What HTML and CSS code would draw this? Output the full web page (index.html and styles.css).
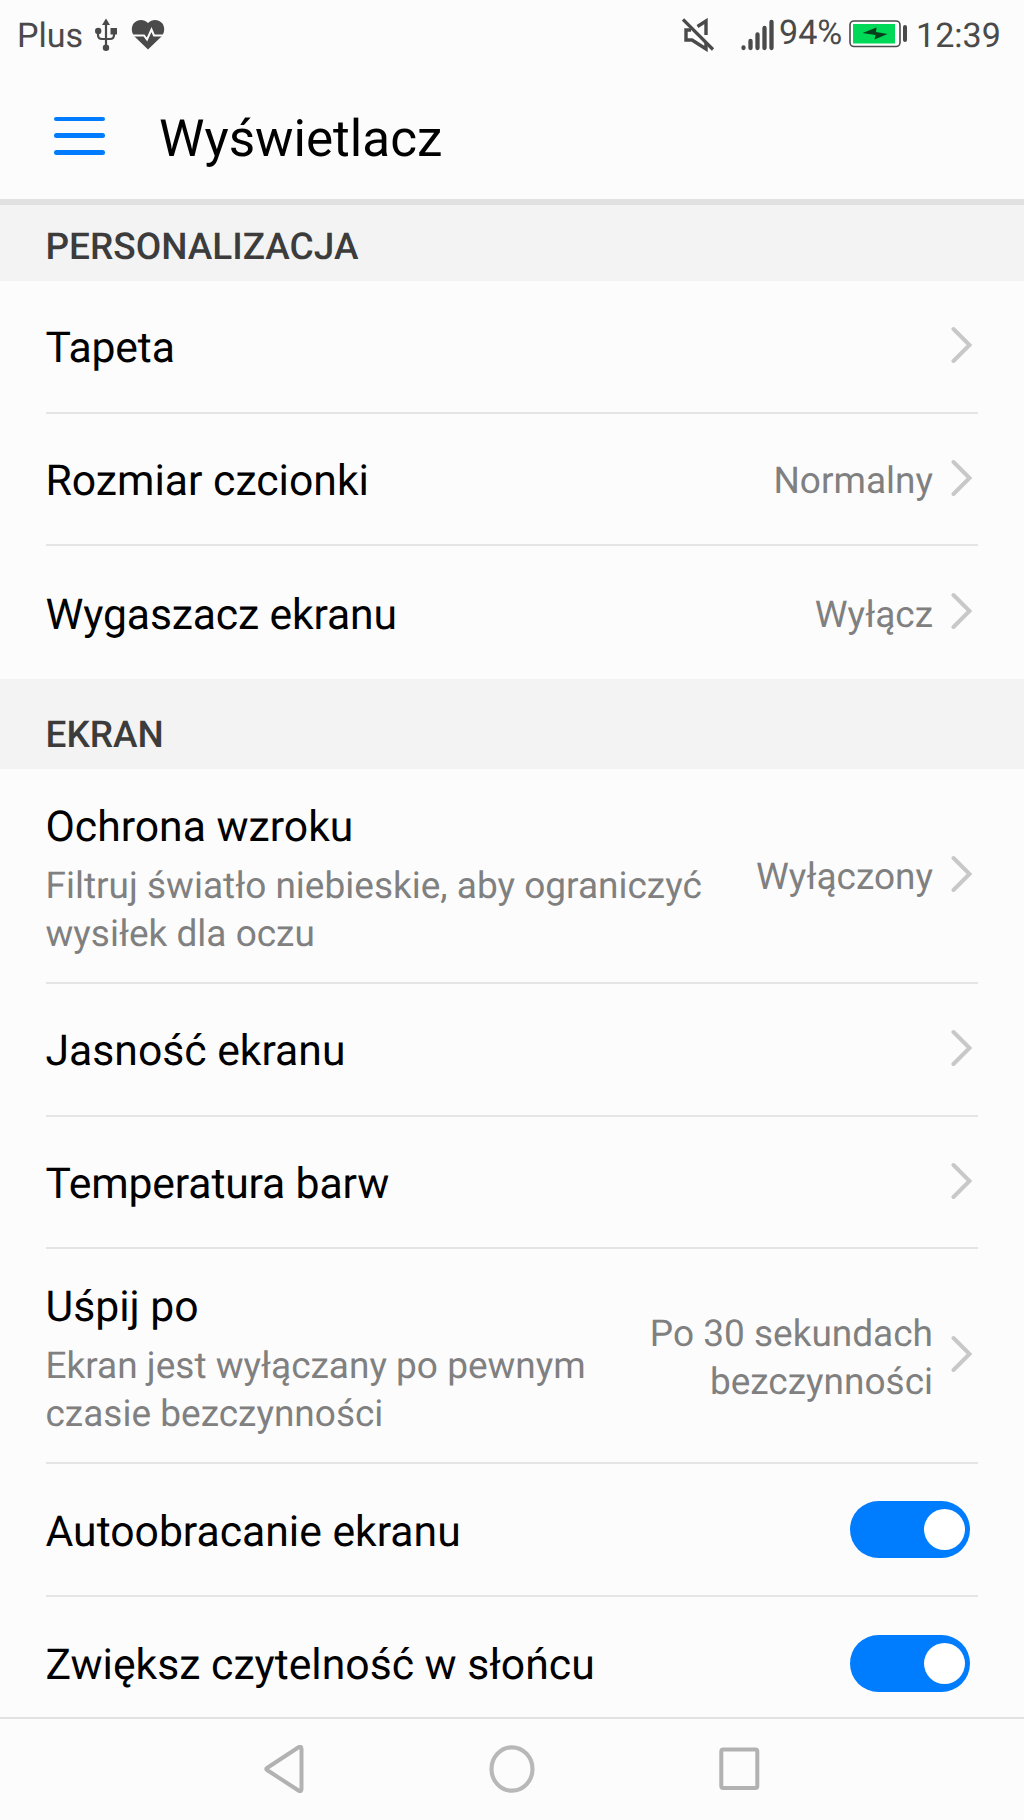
FILE: index.html
```html
<!DOCTYPE html>
<html lang="pl">
<head>
    <meta charset="UTF-8">
    <meta name="viewport" content="width=device-width, initial-scale=1.0">
    <title>Wyświetlacz</title>
    <link rel="stylesheet" href="styles.css">
</head>
<body>

    <svg class="sprite" width="0" height="0">
        <symbol id="arrow" viewBox="0 0 22 38">
            <path d="M2.5 3 L18.5 19 L2.5 35" fill="none" stroke="#c8c8c8" stroke-width="4" stroke-linecap="round" stroke-linejoin="miter"/>
        </symbol>
    </svg>

    <div class="wrap">
        <div class="status">
            <span class="carrier">Plus</span>
            <svg class="usb" width="24" height="34" viewBox="0 0 24 34">
                <path d="M12 4V29M4 13v4q0 4 4 4h8q4 0 4-4v-4" fill="none" stroke="#4a4a4a" stroke-width="2.2"/>
                <path d="M12 0.5L16 7H8z" fill="#4a4a4a"/>
                <circle cx="4.2" cy="13" r="3.2" fill="#4a4a4a"/>
                <rect x="16.5" y="10" width="6.5" height="6.5" fill="#4a4a4a"/>
                <circle cx="12" cy="29.7" r="3.2" fill="#4a4a4a"/>
            </svg>
            <svg class="heart" width="34" height="30" viewBox="0 0 34 30">
                <path d="M17 29.5L3.5 16.5C0 12.5 0 6.5 3 3C7-1 13-1 17 3C21-1 27-1 31 3C34 6.5 34 12.5 30.5 16.5z" fill="#4a4a4a"/>
                <path d="M0 15.5H13L16 19.5L20.5 9.5L23 15.5H34" fill="none" stroke="#fcfcfc" stroke-width="2"/>
            </svg>
            <span class="space"></span>
            <svg class="mute" width="33" height="34" viewBox="0 0 33 34">
                <path d="M9 12H4V22H10L24 31V25M15.5 8.5L24 3V17" fill="none" stroke="#4a4a4a" stroke-width="3.4"/>
                <path d="M1 1.5L31 31.5" stroke="#4a4a4a" stroke-width="3.2"/>
            </svg>
            <svg class="signal" width="33" height="32" viewBox="0 0 33 32">
                <path d="M2.5 28.5v.5M9.5 22v7M16.5 15.5v13.5M23.5 9v20M30.5 3v26" stroke="#4a4a4a" stroke-width="4.3" stroke-linecap="round"/>
            </svg>
            <span class="percent">94%</span>
            <svg class="battery" width="59" height="28" viewBox="0 0 59 28">
                <rect x="1" y="1" width="50" height="25.5" rx="4" fill="#fff" stroke="#4a4a4a" stroke-width="1.6"/>
                <rect x="4" y="4" width="42" height="19.5" fill="#00d957"/>
                <path d="M13.5 13L27.5 7.5L27 12L38.5 14L25.5 19.5L26.5 15z" fill="#083f1b"/>
                <path d="M56 7v13" stroke="#4a4a4a" stroke-width="4" stroke-linecap="round"/>
            </svg>
            <span class="time">12:39</span>
        </div>

        <div class="header">
            <div class="menu"><i></i><i></i><i></i></div>
            <h1>Wyświetlacz</h1>
        </div>

        <div class="cont">
            <h2 class="first">PERSONALIZACJA</h2>
            <div class="row">
                <strong class="narrow">Tapeta</strong>
                <svg class="arrow"><use href="#arrow"/></svg>
            </div>
            <div class="row">
                <strong>Rozmiar czcionki</strong>
                <span class="value">Normalny</span>
                <svg class="arrow"><use href="#arrow"/></svg>
            </div>
            <div class="row last">
                <strong class="narrow">Wygaszacz ekranu</strong>
                <span class="value">Wyłącz</span>
                <svg class="arrow"><use href="#arrow"/></svg>
            </div>

            <h2>EKRAN</h2>
            <div class="row tall">
                <div class="text">
                    <strong>Ochrona wzroku</strong>
                    <p>Filtruj światło niebieskie, aby ograniczyć<br>wysiłek dla oczu</p>
                </div>
                <span class="value">Wyłączony</span>
                <svg class="arrow"><use href="#arrow"/></svg>
            </div>
            <div class="row">
                <strong>Jasność ekranu</strong>
                <svg class="arrow"><use href="#arrow"/></svg>
            </div>
            <div class="row">
                <strong class="narrow">Temperatura barw</strong>
                <svg class="arrow"><use href="#arrow"/></svg>
            </div>
            <div class="row tall">
                <div class="text">
                    <strong>Uśpij po</strong>
                    <p>Ekran jest wyłączany po pewnym<br>czasie bezczynności</p>
                </div>
                <span class="value">Po 30 sekundach<br>bezczynności</span>
                <svg class="arrow"><use href="#arrow"/></svg>
            </div>
            <div class="row">
                <strong>Autoobracanie ekranu</strong>
                <div class="switch"><i></i></div>
            </div>
            <div class="row last">
                <strong>Zwiększ czytelność w słońcu</strong>
                <div class="switch"><i></i></div>
            </div>
        </div>

        <div class="nav">
            <svg width="40" height="48" viewBox="0 0 40 48">
                <path d="M34.2 2.5Q37.5 .5 37.5 4V44Q37.5 47.5 34.5 45.500L3 25Q1.5 24 3 23z" fill="none" stroke="#b2b2b2" stroke-width="4" stroke-linejoin="round"/>
            </svg>
            <svg width="46" height="48" viewBox="0 0 46 48">
                <ellipse cx="23" cy="24" rx="20.5" ry="21.7" fill="none" stroke="#b8b8b8" stroke-width="4.2"/>
            </svg>
            <svg width="41" height="44" viewBox="0 0 41 44">
                <rect x="2.3" y="2.5" width="36" height="38.5" rx="2" fill="none" stroke="#b2b2b2" stroke-width="4"/>
            </svg>
        </div>
    </div>

</body>
</html>
```
FILE: styles.css
```css
*{margin:0;padding:0;box-sizing:border-box;}
body{background-color:#fcfcfc;font-family:Roboto,"Noto Sans",sans-serif;color:#000;text-rendering:geometricPrecision;}
svg{display:block;flex-shrink:0;}
.sprite{display:none;}
.wrap{width:1024px;height:1820px;overflow:hidden;display:flex;flex-direction:column;}

.status{height:70px;padding:0 23px 0 17px;display:flex;align-items:center;font-size:34.1px;line-height:40px;color:#4a4a4a;}
.status .carrier{width:77px;padding-top:2px;}
.status .heart{margin-left:13px;}
.status .space{flex:1;}
.status .signal{margin:0 5px 0 26px;}
.status .percent{width:66px;margin-bottom:4px;}
.status .battery{margin:0 8px 2px 4px;}
.status .time{width:85px;padding-top:2px;}

.header{height:135px;padding:0 53px;border-bottom:6px solid #e1e1e1;display:flex;align-items:center;}
.header .menu{width:53px;height:40px;margin-right:53px;padding:2px 1px 0;display:flex;flex-direction:column;gap:12px;}
.header .menu i{height:5px;border-radius:3px;background-color:#007dff;}
.header h1{padding-top:9px;font-size:51.2px;font-weight:400;line-height:60px;}

h2{height:90px;padding:35px 45.5px 0;background-color:#f3f3f3;font-size:37px;font-weight:500;line-height:44px;color:#3c3c3c;}
h2.first{height:76px;padding-top:21px;}

.row{height:132.7px;margin:0 46px 0 45.5px;border-bottom:2px solid #e5e5e5;display:flex;align-items:center;}
.row.last{border-bottom:0;}
.row.tall{height:215px;}
.row strong{flex:1;padding-top:4px;font-size:42.7px;font-weight:400;line-height:50px;white-space:nowrap;}
.row strong.narrow{letter-spacing:-0.15px;}
.row .text{flex:1;padding-top:10px;}
.row .text strong{display:block;padding-top:0;}
.row p{margin-top:11px;font-size:37px;line-height:48.4px;color:#808080;white-space:nowrap;}
.row .value{padding-top:6px;font-size:37px;line-height:48.4px;color:#808080;text-align:right;}
.row .arrow{width:22px;height:38px;margin:0 5px 3px 18px;}

.switch{width:120px;height:57px;margin-right:8px;padding-right:5px;border-radius:29px;background-color:#007dff;display:flex;align-items:center;justify-content:flex-end;}
.switch i{width:41px;height:41px;border-radius:50%;background-color:#fff;}

.cont{height:1512px;overflow:hidden;flex-shrink:0;}
.nav{height:103px;padding:0 264px 1px;border-top:2px solid #e1e1e1;display:flex;align-items:center;justify-content:space-between;flex-shrink:0;}
```
